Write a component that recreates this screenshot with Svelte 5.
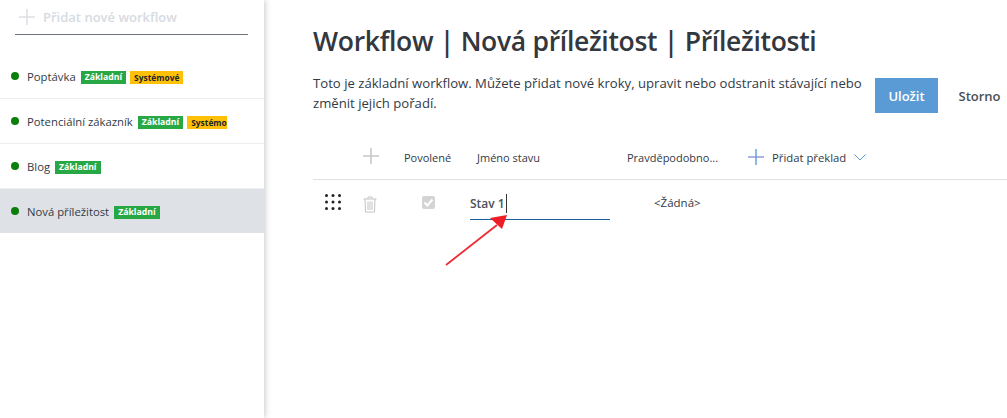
<script>
  const flows = [
    { name: 'Poptávka', system: 'Systémové' },
    { name: 'Potenciální zákazník', system: 'Systémo', clip: true },
    { name: 'Blog' },
    { name: 'Nová příležitost', active: true }
  ];
</script>

<div class="page">
  <aside class="sidebar">
    <div class="add">
      <svg width="16" height="16" viewBox="0 0 16 16"><path d="M8 0v16M0 8h16" stroke="#dde0e5" stroke-width="1.6" fill="none"/></svg>
      <span>Přidat nové workflow</span>
    </div>
    <ul class="list">
      {#each flows as f}
        <li class:active={f.active}>
          <i class="dot"></i>
          <span class="name">{f.name}</span>
          <span class="tag green">Základní</span>
          {#if f.system}<span class="tag yellow" class:clip={f.clip}>{f.system}</span>{/if}
        </li>
      {/each}
    </ul>
  </aside>

  <main class="main">
    <h1>Workflow | Nová příležitost | Příležitosti</h1>
    <div class="intro">
      <p>Toto je základní workflow. Můžete přidat nové kroky, upravit nebo odstranit stávající nebo změnit jejich pořadí.</p>
      <button class="save">Uložit</button>
      <button class="cancel">Storno</button>
    </div>
    <div class="row head">
      <span class="c-drag"></span>
      <span class="c-del">
        <svg width="16" height="16" viewBox="0 0 16 16"><path d="M8 0v16M0 8h16" stroke="#c8c8c8" stroke-width="1.6" fill="none"/></svg>
      </span>
      <span class="c-on">Povolené</span>
      <span class="c-name">Jméno stavu</span>
      <span class="c-prob">Pravděpodobno...</span>
      <span class="c-trans">
        <svg width="16" height="16" viewBox="0 0 16 16"><path d="M8 0v16" stroke="#5b9bd5" stroke-width="1.4"/><path d="M0 8h16" stroke="#8c96d8" stroke-width="1.4"/></svg>
        <span>Přidat překlad</span>
        <svg class="chev" width="12" height="7" viewBox="0 0 12 7"><path d="M.5.5 6 6l5.500-5.500" stroke="#5b9bd5" fill="none"/></svg>
      </span>
    </div>
    <div class="row body">
      <span class="c-drag">
        <svg width="16" height="16" viewBox="0 0 16 16" fill="#222">
          {#each [1.500, 8, 14.500] as y}{#each [1.500, 8, 14.500] as x}<circle cx={x} cy={y} r="1.500"/>{/each}{/each}
        </svg>
      </span>
      <span class="c-del">
        <svg width="14" height="17" viewBox="0 0 14 17" fill="none" stroke="#c4c4c4"><path d="M.5 3h13M5 3V1h4v2M2 3l.5 13h9L12 3M5 5.500V14M7 5.500V14M9 5.500V14"/></svg>
      </span>
      <span class="c-on"><i class="check"><svg width="13" height="13" viewBox="0 0 13 13"><path d="M2.500 6.500 5.300 9.500 10.500 3.500" stroke="#fff" stroke-width="2" fill="none"/></svg></i></span>
      <span class="c-name"><span class="input">Stav 1<i class="caret"></i></span></span>
      <span class="c-prob val">&lt;Žádná&gt;</span>
    </div>
  </main>

  <svg class="arrow" width="70" height="60" viewBox="0 0 70 60">
    <path d="M1 56 52 16" stroke="#ee2a33" stroke-width="1.800" fill="none"/>
    <path d="M62 6 45 9 57 20Z" fill="#ee1c25"/>
  </svg>
</div>

<style>
  :global(body) { margin: 0; background: #fff; }
  .page {
    position: relative;
    display: flex;
    width: 1007px;
    height: 418px;
    overflow: hidden;
    font-family: "Open Sans", "Noto Sans", sans-serif;
    color: #323a45;
    font-size: 11.300px;
  }
  .sidebar {
    flex: 0 0 264px;
    box-shadow: 1px 0 6px rgba(0,0,0,.22);
    z-index: 1;
    background: #fff;
  }
  .add {
    display: flex;
    align-items: center;
    gap: 8px;
    height: 34px;
    margin: 0 16px 0 15px;
    padding-left: 4px;
    border-bottom: 1px solid #6c757d;
    color: #d6dbe1;
    font-size: 13px;
    font-weight: 600;
  }
  .list { list-style: none; margin: 19px 0 0; padding: 0; }
  .list li {
    display: flex;
    align-items: center;
    height: 44px;
    border-bottom: 1px solid #edeef0;
    padding-left: 11px;
    white-space: nowrap;
    overflow: hidden;
  }
  .list li.active { background: #dee1e6; border-bottom: 0; }
  .dot { width: 8px; height: 8px; border-radius: 50%; background: #0b7e0b; margin-right: 8px; flex: none; }
  .name { margin-right: 5px; }
  .tag {
    font-size: 8.700px;
    font-weight: 700;
    line-height: 13px;
    padding: 0 4px;
    margin: 2px 4px 0 0;
  }
  .green { background: #28a745; color: #fff; }
  .yellow { background: #ffc107; color: #212529; font-size: 8.400px; }
  .clip { width: 40px; box-sizing: border-box; overflow: hidden; flex: none; }
  .main { flex: 1; padding: 0 0 0 49px; min-width: 0; }
  h1 {
    margin: 22px 0 0;
    font-size: 26.500px;
    line-height: 38px;
    font-weight: 600;
    letter-spacing: -.3px;
    color: #33373e;
    white-space: nowrap;
  }
  .intro { display: flex; align-items: flex-start; margin-top: 13px; position: relative; }
  .intro p {
    margin: 0;
    width: 558px;
    font-size: 13.150px;
    line-height: 20px;
    flex: none;
  }
  .intro button { border: 0; font: inherit; font-size: 13px; font-weight: 600; height: 35px; padding: 0; margin-top: 5px; flex: none; }
  .save { width: 63px; background: #5b9bd5; color: #fff; margin-left: 4px; }
  .cancel { width: 83px; background: none; color: #4a4f57; }
  .row { display: flex; align-items: center; }
  .head {
    height: 46px;
    margin-top: 20px;
    border-bottom: 1px solid #e1e1e1;
    font-size: 11px;
    white-space: nowrap;
  }
  .head > span:not(.c-del) { margin-top: 2px; }
  .body { align-items: flex-start; }
  .c-drag { width: 49px; flex: none; display: flex; padding-left: 12px; box-sizing: border-box; }
  .c-del { width: 42px; flex: none; display: flex; padding-left: 1px; box-sizing: border-box; }
  .c-on { width: 73px; flex: none; }
  .c-name { width: 150px; flex: none; }
  .c-prob { width: 121px; flex: none; }
  .c-trans { display: flex; align-items: center; gap: 8px; font-size: 11.300px; }
  .chev { margin-left: 0; }
  .body > span { margin-top: 14px; }
  .body .c-del { margin-top: 16px; }
  .check {
    display: block;
    width: 13px;
    height: 13px;
    background: #d4d4d4;
    border-radius: 2px;
    margin: 2px 0 0 18px;
  }
  .check svg { display: block; }
  .input {
    display: block;
    margin-left: -7px;
    width: 140px;
    height: 25px;
    border-bottom: 1px solid #1c5f9e;
    font-weight: 600;
    font-size: 12px;
    line-height: 19px;
    color: #4a525c;
  }
  .caret { display: inline-block; width: 1px; height: 19px; background: #333; vertical-align: top; margin-left: 1px; }
  .val { padding-left: 27px; box-sizing: border-box; line-height: 18px; font-size: 11.500px; }
  .arrow { position: absolute; left: 445px; top: 209px; z-index: 2; }
</style>
